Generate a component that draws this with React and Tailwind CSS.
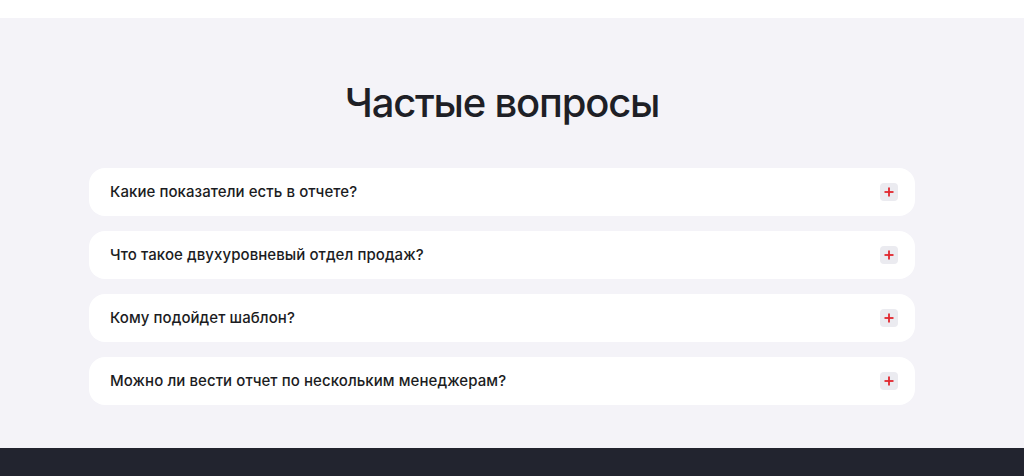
import React, { useState } from 'react';

const questions = [
  { q: 'Какие показатели есть в отчете?', a: 'Выручка, конверсия, количество сделок и средний чек по каждому менеджеру.' },
  { q: 'Что такое двухуровневый отдел продаж?', a: 'Структура, где первая линия квалифицирует лиды, а вторая закрывает сделки.' },
  { q: 'Кому подойдет шаблон?', a: 'Руководителям отделов продаж и собственникам малого и среднего бизнеса.' },
  { q: 'Можно ли вести отчет по нескольким менеджерам?', a: 'Да, в шаблоне можно добавить любое количество менеджеров.' },
];

function PlusBadge({ open }) {
  return (
    <span className="flex h-[18px] w-[18px] shrink-0 items-center justify-center rounded-[4px] bg-[#ebebf0]">
      <svg width="10" height="10" viewBox="0 0 10 10" fill="none">
        <path d="M5 0.5v9" stroke="#e1262d" strokeWidth="1.8" className={open ? 'opacity-0' : ''} />
        <path d="M0.5 5h9" stroke="#e1262d" strokeWidth="1.8" />
      </svg>
    </span>
  );
}

function FaqItem({ item }) {
  const [open, setOpen] = useState(false);
  return (
    <div className="rounded-[16px] bg-white">
      <button
        type="button"
        onClick={() => setOpen((v) => !v)}
        className="flex h-[48px] w-full items-center justify-between pl-[21px] pr-[17px] text-left"
      >
        <span className="text-[15px] font-medium tracking-[0.005em] text-[#1b1c22]">{item.q}</span>
        <PlusBadge open={open} />
      </button>
      {open ? <p className="px-[21px] pb-4 text-sm text-[#5b5d66]">{item.a}</p> : null}
    </div>
  );
}

export default function App() {
  return (
    <div className="h-[476px] overflow-hidden bg-white font-['Inter','Noto_Sans',sans-serif]">
      <div className="h-[18px] bg-white" />
      <section className="bg-[#f4f3f8] pb-[43px] pt-[59px]">
        <div className="w-[1004px]">
          <h2 className="text-center text-[40px] font-medium leading-[52px] tracking-[-0.03em] text-[#1e1f26]">Частые вопросы</h2>
          <div className="mx-auto mt-[39px] flex w-[826px] flex-col gap-[15px]">
            {questions.map((item) => (
              <FaqItem key={item.q} item={item} />
            ))}
          </div>
        </div>
      </section>
      <footer className="h-[28px] bg-[#22242f]" />
    </div>
  );
}
